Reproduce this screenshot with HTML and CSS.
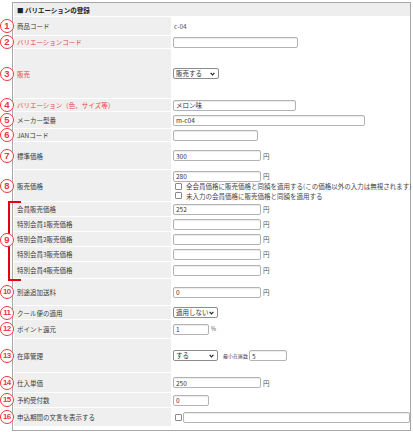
FILE: index.html
```html
<!DOCTYPE html>
<html lang="ja">
<head>
<meta charset="utf-8">
<link rel="stylesheet" href="styles.css">
</head>
<body>
<div class="box">
  <div class="head">■ バリエーションの登録</div>

  <div class="row h18"><div class="lab"><span class="num">1</span>商品コード</div><div class="val"><span class="txt">c-04</span></div></div>
  <div class="row h12"><div class="lab red"><span class="num">2</span>バリエーションコード</div><div class="val"><input class="inp w125" value=""></div></div>
  <div class="row h49"><div class="lab red"><span class="num">3</span>販売</div><div class="val"><span class="sel w46"><select><option>販売する</option></select><svg width="5" height="4" viewBox="0 0 5 4"><polyline points="0.6,0.8 2.5,2.8 4.4,0.8" fill="none" stroke="#222" stroke-width="1.2"/></svg></span></div></div>
  <div class="row h12"><div class="lab red"><span class="num">4</span>バリエーション（色、サイズ等）</div><div class="val"><input class="inp w123" value="メロン味"></div></div>
  <div class="row h16"><div class="lab"><span class="num">5</span>メーカー型番</div><div class="val"><input class="inp w192" value="m-c04"></div></div>
  <div class="row h12"><div class="lab"><span class="num">6</span>JANコード</div><div class="val"><input class="inp w85" value=""></div></div>
  <div class="row h27"><div class="lab"><span class="num">7</span>標準価格</div><div class="val"><input class="inp w88" value="300"><span class="unit">円</span></div></div>
  <div class="row h31"><div class="lab"><span class="num">8</span>販売価格</div>
    <div class="val col">
      <div class="line"><input class="inp w88" value="280"><span class="unit">円</span></div>
      <label class="chk"><input type="checkbox">全会員価格に販売価格と同額を適用する(この価格以外の入力は無視されます)</label>
      <label class="chk"><input type="checkbox">未入力の会員価格に販売価格と同額を適用する</label>
    </div>
  </div>

  <div class="grp">
    <span class="brk"></span>
    <span class="num">9</span>
    <div class="row h14"><div class="lab">会員販売価格</div><div class="val"><input class="inp w88" value="252"><span class="unit">円</span></div></div>
    <div class="row h14"><div class="lab">特別会員1販売価格</div><div class="val"><input class="inp w88" value=""><span class="unit">円</span></div></div>
    <div class="row h14"><div class="lab">特別会員2販売価格</div><div class="val"><input class="inp w88" value=""><span class="unit">円</span></div></div>
    <div class="row h14"><div class="lab">特別会員3販売価格</div><div class="val"><input class="inp w88" value=""><span class="unit">円</span></div></div>
    <div class="row h16"><div class="lab">特別会員4販売価格</div><div class="val"><input class="inp w88" value=""><span class="unit">円</span></div></div>
  </div>

  <div class="row h26"><div class="lab"><span class="num n2">10</span>別途追加送料</div><div class="val"><input class="inp w88" value="0"><span class="unit">円</span></div></div>
  <div class="row h13"><div class="lab"><span class="num n2">11</span>クール便の適用</div><div class="val"><span class="sel w45"><select><option>適用しない</option></select><svg width="5" height="4" viewBox="0 0 5 4"><polyline points="0.6,0.8 2.5,2.8 4.4,0.8" fill="none" stroke="#222" stroke-width="1.2"/></svg></span></div></div>
  <div class="row h18"><div class="lab"><span class="num n2">12</span>ポイント還元</div><div class="val"><input class="inp w36" value="1"><span class="unit pct">%</span></div></div>
  <div class="row h33"><div class="lab"><span class="num n2">13</span>在庫管理</div><div class="val"><span class="sel w45"><select><option>する</option></select><svg width="5" height="4" viewBox="0 0 5 4"><polyline points="0.6,0.8 2.5,2.8 4.4,0.8" fill="none" stroke="#222" stroke-width="1.2"/></svg></span><span class="small">最小在庫数</span><input class="inp w38" value="5"></div></div>
  <div class="row h19"><div class="lab"><span class="num n2">14</span>仕入単価</div><div class="val"><input class="inp w88" value="250"><span class="unit">円</span></div></div>
  <div class="row h14"><div class="lab"><span class="num n2">15</span>予約受付数</div><div class="val"><input class="inp w36" value="0"></div></div>
  <div class="row h18"><div class="lab"><span class="num n2">16</span>申込期間の文言を表示する</div><div class="val"><input class="cb cb16" type="checkbox"><input class="inp w227" value=""></div></div>
</div>
</body>
</html>
```
FILE: styles.css
```css
* { box-sizing: border-box; }
body {
  margin: 0;
  font-family: "Noto Sans CJK JP", "Noto Sans", sans-serif;
  font-size: 6.5px;
  color: #444;
  background: #fff;
}
.box {
  margin: 2px 0 0 12px;
  width: 399px;
  height: 429px;
  border: 1px solid #a8a8a8;
  padding: 0 0 0 1px;
  display: flex;
  flex-direction: column;
  gap: 1px;
}
.head {
  flex: none;
  height: 13px;
  background: #eeeeee;
  font-weight: bold;
  color: #222;
  padding-left: 3px;
  display: flex;
  align-items: center;
}
.row {
  flex: none;
  display: grid;
  grid-template-columns: 157px 1fr;
  column-gap: 1px;
}
.h12 { height: 12px; }
.h13 { height: 13px; }
.h14 { height: 14px; }
.h16 { height: 16px; }
.h18 { height: 18px; }
.h19 { height: 19px; }
.h26 { height: 26px; }
.h27 { height: 27px; }
.h31 { height: 31px; }
.h33 { height: 33px; }
.h49 { height: 49px; }
.lab {
  position: relative;
  background: #efefef;
  display: flex;
  align-items: center;
  padding-left: 3px;
  color: #3c3c3c;
  white-space: nowrap;
}
.lab.red { color: #e8474b; }
.val {
  display: flex;
  align-items: center;
  padding-left: 1px;
  color: #444;
}
.val.col {
  flex-direction: column;
  align-items: flex-start;
  justify-content: center;
}
.line { display: flex; align-items: center; }
.txt { padding-left: 1px; color: #555; }
.num {
  position: absolute;
  left: -14px;
  top: 50%;
  margin-top: -7px;
  width: 14px;
  height: 14px;
  border: 1.5px solid #e8383d;
  border-radius: 50%;
  background: #fff;
  color: #e8383d;
  font-family: "Liberation Sans", Arial, sans-serif;
  font-weight: bold;
  font-size: 9.5px;
  display: flex;
  align-items: center;
  justify-content: center;
  line-height: 1;
  z-index: 2;
}
.num.n2 { font-size: 8px; letter-spacing: -0.7px; padding-right: 0.7px; }
.grp {
  flex: none;
  position: relative;
  display: flex;
  flex-direction: column;
  gap: 1px;
}
.brk {
  position: absolute;
  left: -6px;
  top: -1px;
  width: 13px;
  height: 80px;
  border: 2px solid #e60012;
  border-right: none;
  z-index: 1;
}
.inp {
  height: 11px;
  border: 1px solid #b3b3b3;
  border-radius: 2px;
  padding: 0 2px;
  margin: 0;
  font: inherit;
  font-size: 6.5px;
  color: #333;
  background: #fff;
  box-shadow: inset 0 1px 1px rgba(0, 0, 0, 0.08);
  outline: none;
}
.w36 { width: 36px; }
.w38 { width: 38px; }
.w85 { width: 85px; }
.w88 { width: 88px; }
.w123 { width: 123px; }
.w125 { width: 125px; }
.w192 { width: 192px; }
.w227 { width: 227px; }
.unit { margin-left: 2px; color: #555; }
.pct { font-size: 5.5px; }
.sel {
  display: inline-flex;
  align-items: center;
  height: 11px;
  border: 1px solid #8c8c8c;
  border-radius: 2px;
  padding: 0 3px 0 2px;
  background: #fff;
}
.sel select {
  appearance: none;
  -webkit-appearance: none;
  border: 0;
  margin: 0;
  padding: 0;
  background: none;
  font: inherit;
  font-size: 6.5px;
  color: #333;
  flex: 1;
  min-width: 0;
  height: 9px;
  line-height: 9px;
  outline: none;
}
.sel svg { flex: none; display: block; }
.w46 { width: 46px; }
.w45 { width: 45px; }
.small { font-size: 5px; margin: 0 1px 0 5px; color: #444; }
.chk {
  display: flex;
  align-items: center;
  gap: 4px;
  height: 9.5px;
  padding-left: 2px;
  color: #444;
  white-space: nowrap;
}
.chk input, .cb {
  appearance: none;
  -webkit-appearance: none;
  width: 7px;
  height: 7px;
  margin: 0;
  border: 1px solid #8a8a8a;
  border-radius: 1px;
  background: #fff;
  flex: none;
}
.cb16 { margin: 0 1px 0 2px; }
```
